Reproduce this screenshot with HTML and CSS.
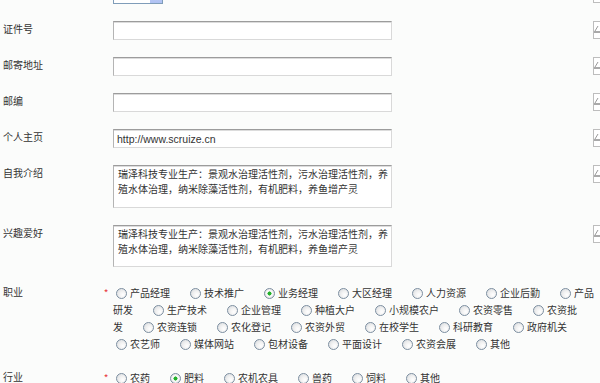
FILE: index.html
```html
<!DOCTYPE html>
<html lang="zh-CN">
<head>
    <meta charset="UTF-8">
    <title>个人资料</title>
    <link rel="stylesheet" href="styles.css">
</head>
<body>
    <form class="profile">
        <div class="row">
            <span class="label"></span><span class="req"></span>
            <div class="field">
                <span class="select"><span class="select-val">1980</span><span class="select-btn"></span></span>
            </div>
            <span class="gap"></span>
            <span class="edit"><svg width="18" height="18" viewBox="0 0 18 18"><path d="M5 5 L2 10" stroke="#999" stroke-width="1" fill="none"/><path d="M1 11 H8" stroke="#555" stroke-width="1"/></svg></span>
        </div>

        <div class="row">
            <span class="label">证件号</span><span class="req"></span>
            <div class="field"><input class="text" type="text"></div>
            <span class="gap"></span>
            <span class="edit"><svg width="18" height="18" viewBox="0 0 18 18"><path d="M5 5 L2 10" stroke="#999" stroke-width="1" fill="none"/><path d="M1 11 H8" stroke="#555" stroke-width="1"/></svg></span>
        </div>

        <div class="row">
            <span class="label">邮寄地址</span><span class="req"></span>
            <div class="field"><input class="text" type="text"></div>
            <span class="gap"></span>
            <span class="edit"><svg width="18" height="18" viewBox="0 0 18 18"><path d="M5 5 L2 10" stroke="#999" stroke-width="1" fill="none"/><path d="M1 11 H8" stroke="#555" stroke-width="1"/></svg></span>
        </div>

        <div class="row">
            <span class="label">邮编</span><span class="req"></span>
            <div class="field"><input class="text" type="text"></div>
            <span class="gap"></span>
            <span class="edit"><svg width="18" height="18" viewBox="0 0 18 18"><path d="M5 5 L2 10" stroke="#999" stroke-width="1" fill="none"/><path d="M1 11 H8" stroke="#555" stroke-width="1"/></svg></span>
        </div>

        <div class="row">
            <span class="label">个人主页</span><span class="req"></span>
            <div class="field"><input class="text" type="text" value="http://www.scruize.cn"></div>
            <span class="gap"></span>
            <span class="edit"><svg width="18" height="18" viewBox="0 0 18 18"><path d="M5 5 L2 10" stroke="#999" stroke-width="1" fill="none"/><path d="M1 11 H8" stroke="#555" stroke-width="1"/></svg></span>
        </div>

        <div class="row">
            <span class="label">自我介绍</span><span class="req"></span>
            <div class="field"><textarea class="area">瑞泽科技专业生产：景观水治理活性剂，污水治理活性剂，养殖水体治理，纳米除藻活性剂，有机肥料，养鱼增产灵</textarea></div>
            <span class="gap"></span>
            <span class="edit"><svg width="18" height="18" viewBox="0 0 18 18"><path d="M5 5 L2 10" stroke="#999" stroke-width="1" fill="none"/><path d="M1 11 H8" stroke="#555" stroke-width="1"/></svg></span>
        </div>

        <div class="row">
            <span class="label">兴趣爱好</span><span class="req"></span>
            <div class="field"><textarea class="area short">瑞泽科技专业生产：景观水治理活性剂，污水治理活性剂，养殖水体治理，纳米除藻活性剂，有机肥料，养鱼增产灵</textarea></div>
            <span class="gap"></span>
            <span class="edit"><svg width="18" height="18" viewBox="0 0 18 18"><path d="M5 5 L2 10" stroke="#999" stroke-width="1" fill="none"/><path d="M1 11 H8" stroke="#555" stroke-width="1"/></svg></span>
        </div>

        <div class="row">
            <span class="label">职业</span><span class="req">*</span>
            <div class="field opts"><label class="opt"><input type="radio" name="job">产品经理</label><label class="opt"><input type="radio" name="job">技术推广</label><label class="opt"><input type="radio" name="job" checked>业务经理</label><label class="opt"><input type="radio" name="job">大区经理</label><label class="opt"><input type="radio" name="job">人力资源</label><label class="opt"><input type="radio" name="job">企业后勤</label><label class="opt"><input type="radio" name="job">产品<br>研发</label><label class="opt"><input type="radio" name="job">生产技术</label><label class="opt"><input type="radio" name="job">企业管理</label><label class="opt"><input type="radio" name="job">种植大户</label><label class="opt"><input type="radio" name="job">小规模农户</label><label class="opt"><input type="radio" name="job">农资零售</label><label class="opt"><input type="radio" name="job">农资批<br>发</label><label class="opt"><input type="radio" name="job">农资连锁</label><label class="opt"><input type="radio" name="job">农化登记</label><label class="opt"><input type="radio" name="job">农资外贸</label><label class="opt"><input type="radio" name="job">在校学生</label><label class="opt"><input type="radio" name="job">科研教育</label><label class="opt"><input type="radio" name="job">政府机关</label><br><label class="opt"><input type="radio" name="job">农艺师</label><label class="opt"><input type="radio" name="job">媒体网站</label><label class="opt"><input type="radio" name="job">包材设备</label><label class="opt"><input type="radio" name="job">平面设计</label><label class="opt"><input type="radio" name="job">农资会展</label><label class="opt"><input type="radio" name="job">其他</label></div>
        </div>

        <div class="row">
            <span class="label">行业</span><span class="req">*</span>
            <div class="field opts"><label class="opt"><input type="radio" name="trade">农药</label><label class="opt"><input type="radio" name="trade" checked>肥料</label><label class="opt"><input type="radio" name="trade">农机农具</label><label class="opt"><input type="radio" name="trade">兽药</label><label class="opt"><input type="radio" name="trade">饲料</label><label class="opt"><input type="radio" name="trade">其他</label></div>
        </div>
    </form>
</body>
</html>
```

FILE: styles.css
```css
body {
    margin: 0;
    background-color: #fbfcfb;
    color: #333333;
    font-family: "Noto Sans CJK SC", sans-serif;
    font-size: 10px;
    overflow: hidden;
}
.profile {
    margin-top: -15px;
    width: 611px;
}
.row {
    display: grid;
    grid-template-columns: 100px 13px 279px 201px 18px;
    align-items: start;
    margin-bottom: 17px;
}
.label {
    padding-left: 3px;
    line-height: 16px;
}
.req {
    color: #e8383d;
    line-height: 17px;
    text-align: center;
    padding-right: 1px;
}
.field {
    display: flex;
}
.text {
    box-sizing: border-box;
    width: 279px;
    height: 19px;
    margin: 0;
    padding: 0 3px;
    border: 1px solid #d9d9d9;
    border-top: 1px solid #9c9c9c;
    border-left: 1px solid #b4b4b4;
    box-shadow: inset 0 1px 0 #dcdcdc;
    background-color: #ffffff;
    color: #333;
    font-family: "Liberation Sans", sans-serif;
    font-size: 10.5px;
    outline: none;
}
.area {
    box-sizing: border-box;
    width: 279px;
    height: 43px;
    margin: 0;
    padding: 0 3px 0 4px;
    border: 1px solid #d9d9d9;
    border-top: 1px solid #9c9c9c;
    border-left: 1px solid #b4b4b4;
    box-shadow: inset 0 1px 0 #dcdcdc;
    background-color: #ffffff;
    color: #333;
    font-family: "Noto Sans CJK SC", sans-serif;
    font-size: 10px;
    line-height: 15px;
    resize: none;
    overflow: hidden;
}
.area.short {
    height: 42px;
}
.select {
    box-sizing: border-box;
    display: flex;
    width: 50px;
    height: 19px;
    border: 1px solid #7f9db9;
    background-color: #ffffff;
}
.select-val {
    flex: 1;
    padding-left: 2px;
    font-family: "Liberation Sans", sans-serif;
    font-size: 11px;
    line-height: 17px;
    background-color: #ffffff;
    color: #222;
    margin: 0 1px 0 0;
}
.select-btn {
    width: 12px;
    background: linear-gradient(#c6d3f7, #b0c2f3);
}
.edit {
    display: block;
    box-sizing: border-box;
    width: 18px;
    height: 18px;
    border: 1px solid #bdbdbd;
    border-right: none;
    background-color: #ffffff;
}
.edit svg {
    display: block;
    margin: -1px 0 0 -1px;
}
.opts {
    grid-column: 3 / span 3;
    display: block;
    white-space: nowrap;
    line-height: 17px;
}
.opt {
    margin-right: 17px;
}
.opt input {
    appearance: none;
    box-sizing: border-box;
    width: 11px;
    height: 11px;
    margin: 0 3px;
    vertical-align: -2px;
    border: 1px solid #7c8ea0;
    border-radius: 50%;
    background: radial-gradient(circle at 65% 65%, #ffffff 0, #f2f2f2 40%, #d4d8dc 100%);
}
.opt input:checked {
    background: radial-gradient(circle, #22b02a 0, #22b02a 1.8px, #ffffff 2.3px, #eeeeee 60%, #d4d8dc 100%);
}
```
